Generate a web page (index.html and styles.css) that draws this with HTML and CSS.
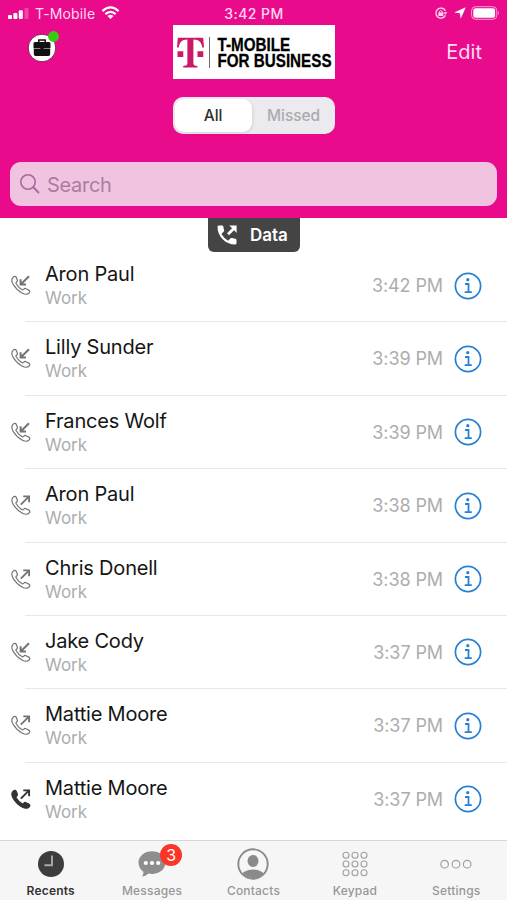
FILE: index.html
```html
<!DOCTYPE html>
<html lang="en">
<head>
    <meta charset="UTF-8">
    <meta name="viewport" content="width=device-width, initial-scale=1.0">
    <title>Recents</title>
    <link rel="stylesheet" href="styles.css">
</head>
<body>
    <!-- Shared icons -->
    <svg class="sprite">
        <symbol id="handset" viewBox="0 0 20 20">
            <path d="M2.2 2.1 C3.2 1.1 4.7 1.2 5.2 2.3 L6.3 5 C6.7 6.2 6.2 6.8 5.2 7.4 C4.8 7.7 4.9 8.2 5.2 8.7 C6.8 11.5 8.7 13.4 11.2 14.8 C11.8 15.1 12.2 15 12.6 14.5 C13.3 13.5 14 13.2 15 13.7 L17.8 15.1 C19 15.7 19.1 16.9 18.2 17.9 C16.6 19.7 13.7 19.4 11 17.9 C7.3 15.9 4.2 12.8 2.1 9.2 C.6 6.5 .3 3.9 2.2 2.1Z"/>
        </symbol>
        <symbol id="arrow-in" viewBox="0 0 20 20">
            <path d="M18 1.2 L10.2 9 M9.6 4.2 V9.6 H15" fill="none" stroke-width="2"/>
        </symbol>
        <symbol id="arrow-out" viewBox="0 0 20 20">
            <path d="M9.8 9.6 L17.6 1.8 M12.3 1.4 H18.1 V7.2" fill="none" stroke-width="1.9"/>
        </symbol>
        <symbol id="info" viewBox="0 0 28 28">
            <circle cx="14" cy="14" r="12.6" fill="none" stroke="#2680d4" stroke-width="1.7"/>
            <circle cx="13.8" cy="7.7" r="1.6" fill="#2680d4"/>
            <path d="M11 12 H14.5 V20 M10.7 20.2 H17.8" fill="none" stroke="#2680d4" stroke-width="1.8"/>
        </symbol>
    </svg>

    <header class="header">
        <div class="status-bar">
            <div class="carrier">
                <svg class="signal" viewBox="0 0 22 13">
                    <rect x="0" y="8" width="4" height="4" rx="1"/>
                    <rect x="5.4" y="6" width="4" height="6" rx="1"/>
                    <rect x="10.8" y="3.3" width="4" height="8.7" rx="1"/>
                    <rect x="16.5" y="1" width="4" height="11" rx="1" opacity=".25"/>
                </svg>
                <span class="carrier-name">T-Mobile</span>
                <svg class="wifi" viewBox="0 0 20 14">
                    <path d="M1.5 5 Q10 -2.8 18.5 5 M4.6 8.2 Q10 3.4 15.4 8.2" fill="none" stroke="#fff" stroke-width="2.3"/>
                    <path d="M6.8 10.2 Q10 7.6 13.2 10.2 L10 13.4Z" fill="#fff"/>
                </svg>
            </div>
            <span class="clock">3:42 PM</span>
            <div class="indicators">
                <svg class="lock" viewBox="0 0 14 12">
                    <path d="M11.4 8.4 A5 5 0 1 1 11.5 4" fill="none" stroke="#ffd3ee" stroke-width="1.3"/>
                    <path d="M9.2 5.2 H13.4 L11.3 7.8Z" fill="#ffd3ee"/>
                    <rect x="4.3" y="5.4" width="5" height="3.6" rx=".5" fill="#ffd3ee"/>
                    <path d="M5.4 5.8 V4.5 Q6.8 2.6 8.2 4.5 V5.8" fill="none" stroke="#ffd3ee"/>
                </svg>
                <svg class="location" viewBox="0 0 12 12">
                    <path d="M11.8 .2 L6.7 11.8 L5.8 6.2 L.2 5.5Z" fill="#fff"/>
                </svg>
                <svg class="battery" viewBox="0 0 29 14">
                    <rect x=".6" y=".7" width="25.2" height="12.6" rx="4" fill="none" stroke="#f7a4d7" stroke-width="1"/>
                    <rect x="2.3" y="2.3" width="21.8" height="9.4" rx="2.2" fill="#fff"/>
                    <path d="M27 4.6 Q28.8 7 27 9.4Z" fill="#f7a4d7"/>
                </svg>
            </div>
        </div>

        <div class="nav-bar">
            <svg class="work-profile" viewBox="0 0 34 34">
                <circle cx="15" cy="18" r="13.8" fill="#fff" stroke="#80205f" stroke-width="1"/>
                <path d="M11.8 12.3 V10 H18.2 V12.3" fill="none" stroke="#111" stroke-width="1.5"/>
                <path d="M8 12 H22 Q23.5 12 23.5 13.5 V18.2 H6.5 V13.5 Q6.5 12 8 12Z M6.8 18.8 H23.2 V24 Q23.2 26 21.5 26 H8.5 Q6.8 26 6.8 24Z" fill="#111"/>
                <rect x="13.4" y="17" width="3.2" height="3" fill="#111"/>
                <circle cx="26.5" cy="6.5" r="5.4" fill="#39cb12"/>
            </svg>
            <div class="brand">
                <svg class="brand-mark" viewBox="0 0 28 31">
                    <path d="M.8 .7 H26.2 L27 10.4 L25.3 10.6 C24.5 5.6 22.5 2.6 16.4 2.5 V25.5 C16.4 28.2 17.4 28.8 20.4 28.9 V30.5 H6.2 V28.9 C9.4 28.8 10.4 28.2 10.4 25.5 V2.5 C4.5 2.6 2.5 5.6 1.7 10.6 L0 10.4Z M.5 14.2 H6.3 V20 H.5Z M20.5 14.2 H26.3 V20 H20.5Z" fill="#cb1967"/>
                </svg>
                <div class="brand-name">T-MOBILE<br>FOR BUSINESS</div>
            </div>
            <span class="edit">Edit</span>
        </div>

        <div class="segmented">
            <span class="segment active">All</span>
            <span class="segment">Missed</span>
        </div>

        <div class="search">
            <svg class="search-icon" viewBox="0 0 20 20">
                <circle cx="8" cy="8" r="7.2" fill="none" stroke="#a66b98" stroke-width="1.6"/>
                <path d="M13.3 13.3 L19 19" stroke="#a66b98" stroke-width="2"/>
            </svg>
            <span class="search-text">Search</span>
        </div>
    </header>

    <div class="data-tab">
        <svg class="data-icon" viewBox="0 0 20 20">
            <path d="M.5 2 Q.5 .6 2 .6 H5 Q6.2 .6 6.4 1.8 Q6.5 3.6 7.1 5.2 Q7.3 6 6.8 6.6 L4.4 9 Q6.9 13.3 11.1 15.7 L13.5 13.3 Q14.1 12.8 14.9 13 L18.3 13.7 Q19.5 13.9 19.5 15.1 V18 Q19.5 19.5 18 19.5 C8.5 19.5 .5 11.5 .5 2Z" fill="#fff"/>
            <path d="M11 9.2 L17.8 2.4" stroke="#fff" stroke-width="2.8"/>
            <path d="M12.3 .4 H19.6 V7.7Z" fill="#fff"/>
        </svg>
        <span>Data</span>
    </div>

    <main class="calls">
        <div class="call">
            <svg class="call-icon"><use href="#handset"/><use href="#arrow-in"/></svg>
            <div class="call-body">
                <div class="who"><div class="name">Aron Paul</div><div class="label">Work</div></div>
                <span class="time">3:42 PM</span>
                <svg class="info"><use href="#info"/></svg>
            </div>
        </div>
        <div class="call">
            <svg class="call-icon"><use href="#handset"/><use href="#arrow-in"/></svg>
            <div class="call-body">
                <div class="who"><div class="name">Lilly Sunder</div><div class="label">Work</div></div>
                <span class="time">3:39 PM</span>
                <svg class="info"><use href="#info"/></svg>
            </div>
        </div>
        <div class="call">
            <svg class="call-icon"><use href="#handset"/><use href="#arrow-in"/></svg>
            <div class="call-body">
                <div class="who"><div class="name">Frances Wolf</div><div class="label">Work</div></div>
                <span class="time">3:39 PM</span>
                <svg class="info"><use href="#info"/></svg>
            </div>
        </div>
        <div class="call">
            <svg class="call-icon"><use href="#handset"/><use href="#arrow-out"/></svg>
            <div class="call-body">
                <div class="who"><div class="name">Aron Paul</div><div class="label">Work</div></div>
                <span class="time">3:38 PM</span>
                <svg class="info"><use href="#info"/></svg>
            </div>
        </div>
        <div class="call">
            <svg class="call-icon"><use href="#handset"/><use href="#arrow-out"/></svg>
            <div class="call-body">
                <div class="who"><div class="name">Chris Donell</div><div class="label">Work</div></div>
                <span class="time">3:38 PM</span>
                <svg class="info"><use href="#info"/></svg>
            </div>
        </div>
        <div class="call">
            <svg class="call-icon"><use href="#handset"/><use href="#arrow-in"/></svg>
            <div class="call-body">
                <div class="who"><div class="name">Jake Cody</div><div class="label">Work</div></div>
                <span class="time">3:37 PM</span>
                <svg class="info"><use href="#info"/></svg>
            </div>
        </div>
        <div class="call">
            <svg class="call-icon"><use href="#handset"/><use href="#arrow-out"/></svg>
            <div class="call-body">
                <div class="who"><div class="name">Mattie Moore</div><div class="label">Work</div></div>
                <span class="time">3:37 PM</span>
                <svg class="info"><use href="#info"/></svg>
            </div>
        </div>
        <div class="call">
            <svg class="call-icon solid"><use href="#handset"/><use href="#arrow-out"/></svg>
            <div class="call-body">
                <div class="who"><div class="name">Mattie Moore</div><div class="label">Work</div></div>
                <span class="time">3:37 PM</span>
                <svg class="info"><use href="#info"/></svg>
            </div>
        </div>
    </main>

    <nav class="tabs">
        <div class="tab current">
            <svg class="tab-icon" viewBox="0 0 32 32">
                <circle cx="16" cy="16" r="13" fill="#3d3d3d"/>
                <path d="M17 7.5 V17.3 H9.5" fill="none" stroke="#aaa" stroke-width="1.9"/>
            </svg>
            <span>Recents</span>
        </div>
        <div class="tab">
            <div class="tab-badge-wrap">
                <svg class="tab-icon" viewBox="0 0 32 32">
                    <path d="M16 3.2 C23.5 3.2 29.5 8 29.5 14.6 C29.5 21.2 23.5 26 16 26 C14.8 26 13.5 25.9 12.4 25.6 C10.4 27.5 8.3 28.6 6 28.6 C7.1 27.3 7.6 25.6 7.4 23.8 C4.3 21.8 2.5 18.5 2.5 14.6 C2.5 8 8.5 3.2 16 3.2Z" fill="#8e8e8e"/>
                    <circle cx="9.8" cy="15" r="2.1" fill="#fff"/>
                    <circle cx="16" cy="15" r="2.1" fill="#fff"/>
                    <circle cx="22.2" cy="15" r="2.1" fill="#fff"/>
                </svg>
                <span class="badge">3</span>
            </div>
            <span>Messages</span>
        </div>
        <div class="tab">
            <svg class="tab-icon" viewBox="0 0 32 32">
                <clipPath id="face"><circle cx="16" cy="16" r="14"/></clipPath>
                <g clip-path="url(#face)" fill="#8a8a8a">
                    <ellipse cx="16" cy="13" rx="5.5" ry="6"/>
                    <ellipse cx="16" cy="28" rx="11.5" ry="6.5"/>
                </g>
                <circle cx="16" cy="16" r="14.7" fill="none" stroke="#8a8a8a" stroke-width="1.9"/>
            </svg>
            <span>Contacts</span>
        </div>
        <div class="tab">
            <svg class="tab-icon" viewBox="0 0 32 32" fill="none" stroke="#a0a0a0" stroke-width="1.1">
                <circle cx="7" cy="7.2" r="3"/><circle cx="16" cy="7.2" r="3"/><circle cx="25" cy="7.2" r="3"/>
                <circle cx="7" cy="16" r="3"/><circle cx="16" cy="16" r="3"/><circle cx="25" cy="16" r="3"/>
                <circle cx="7" cy="24.8" r="3"/><circle cx="16" cy="24.8" r="3"/><circle cx="25" cy="24.8" r="3"/>
            </svg>
            <span>Keypad</span>
        </div>
        <div class="tab">
            <svg class="tab-icon" viewBox="0 0 32 32" fill="none" stroke="#a0a0a0" stroke-width="1.2">
                <circle cx="4.6" cy="16.2" r="3.8"/><circle cx="16" cy="16.2" r="3.8"/><circle cx="27.2" cy="16.2" r="3.8"/>
            </svg>
            <span>Settings</span>
        </div>
    </nav>
</body>
</html>
```
FILE: styles.css
```css
* {
    box-sizing: border-box;
}

body {
    font-family: Inter, "Liberation Sans", sans-serif;
    background-color: #fff;
    margin: 0;
    height: 900px;
    display: flex;
    flex-direction: column;
    overflow: hidden;
}

svg {
    display: block;
    flex-shrink: 0;
}

.sprite {
    display: none;
}

.header {
    background-color: #ea0b8c;
    height: 218px;
    color: #ffdaf1;
}

.status-bar {
    display: grid;
    grid-template-columns: 1fr auto 1fr;
    align-items: center;
    height: 25px;
    padding: 1px 7px 0 8px;
    font-size: 14px;
}

.carrier {
    display: flex;
    align-items: center;
}

.signal {
    width: 22px;
    height: 13px;
    fill: #fff;
}

.carrier-name {
    margin-left: 5px;
    letter-spacing: 0.15px;
}

.wifi {
    width: 19px;
    height: 14px;
    margin-left: 6px;
}

.clock {
    font-weight: 500;
    letter-spacing: 0.45px;
}

.indicators {
    display: flex;
    align-items: center;
    justify-content: flex-end;
}

.lock {
    width: 14px;
    height: 12px;
}

.location {
    width: 12px;
    height: 12px;
    margin: 0 5px 0 6px;
}

.battery {
    width: 29px;
    height: 14px;
}

.nav-bar {
    display: grid;
    grid-template-columns: 1fr 162px 1fr;
    height: 54px;
}

.work-profile {
    width: 34px;
    height: 34px;
    margin: 5px 0 0 27px;
}

.brand {
    display: flex;
    align-items: center;
    background-color: #fff;
    padding-left: 4px;
}

.brand-mark {
    width: 28px;
    height: 31px;
}

.brand-name {
    height: 31px;
    margin-left: 4px;
    padding-left: 9px;
    border-left: 1px solid #555;
    color: #000;
    font-family: "Liberation Sans", Arial, sans-serif;
    font-weight: bold;
    font-size: 18px;
    line-height: 16.5px;
    white-space: nowrap;
    transform: scaleX(0.845);
    transform-origin: left;
    -webkit-text-stroke: 0.3px #000;
}

.edit {
    justify-self: end;
    margin: 15px 25px 0 0;
    font-size: 20px;
    line-height: 24px;
}

.segmented {
    display: flex;
    width: 162px;
    height: 37px;
    margin: 18px auto 0;
    padding: 2px;
    border-radius: 10px;
    background-color: #ebeaee;
}

.segment {
    flex: 1;
    padding-left: 3px;
    font-size: 15.5px;
    font-weight: 500;
    line-height: 33px;
    letter-spacing: -0.1px;
    text-align: center;
    color: #aaaab0;
}

.segment.active {
    flex: none;
    width: 77px;
    padding-left: 0;
    border-radius: 9px;
    background-color: #fff;
    color: #303030;
    box-shadow: 1px 1px 3px rgba(0, 0, 0, 0.1);
}

.search {
    display: flex;
    align-items: center;
    height: 44px;
    margin: 28px 10px 0;
    padding-left: 10px;
    border-radius: 11px;
    background-color: #f0c4e1;
}

.search-icon {
    width: 20px;
    height: 20px;
}

.search-text {
    margin-left: 7px;
    padding-top: 1px;
    font-size: 20px;
    letter-spacing: -0.3px;
    color: #ab7c9f;
}

.data-tab {
    display: flex;
    align-items: center;
    width: 92px;
    height: 34px;
    margin-left: 208px;
    padding-left: 9px;
    border-radius: 0 0 6px 6px;
    background-color: #444;
    color: #fff;
    font-size: 17px;
    font-weight: 600;
}

.data-icon {
    width: 20px;
    height: 20px;
    margin-right: 13px;
}

.calls {
    height: 588px;
    margin-top: -3px;
}

.call {
    display: flex;
    height: 73.4px;
}

.call-icon {
    width: 20px;
    height: 20px;
    margin: 26px -6px 0 11px;
    fill: #fff;
    stroke: #747474;
    stroke-width: 1.2px;
}

.call-icon.solid {
    fill: #333;
    stroke: #333;
}

.call-body {
    display: flex;
    flex: 1;
    border-bottom: 1px solid #e7e7e7;
    padding: 0 25px 0 20px;
}

.call:last-child .call-body {
    border-bottom: none;
}

.who {
    flex: 1;
    padding-top: 13px;
}

.name {
    font-size: 20px;
    line-height: 24px;
    letter-spacing: -0.2px;
    color: #151515;
}

.label {
    font-size: 17px;
    line-height: 24px;
    color: #adadad;
}

.time {
    margin-top: 25px;
    font-size: 18px;
    line-height: 24px;
    letter-spacing: -0.1px;
    color: #adadad;
}

.info {
    width: 28px;
    height: 28px;
    margin: 22.5px 0 0 11px;
}

.tabs {
    display: grid;
    grid-template-columns: repeat(5, 1fr);
    height: 60px;
    margin-top: auto;
    border-top: 1px solid #d6d6d6;
    background-color: #f6f6f6;
}

.tab {
    display: flex;
    flex-direction: column;
    align-items: center;
    padding-top: 6.5px;
    font-size: 12px;
    font-weight: 500;
    line-height: 16px;
    letter-spacing: 0.2px;
    color: #969696;
}

.tab.current {
    color: #333;
    font-weight: 600;
}

.tab-icon {
    width: 32px;
    height: 32px;
    margin-bottom: 3.5px;
}

.tab-badge-wrap {
    position: relative;
}

.badge {
    position: absolute;
    top: -4px;
    right: -14px;
    width: 22px;
    height: 22px;
    border-radius: 50%;
    background-color: #fa3628;
    color: #fff;
    font-size: 16px;
    font-weight: 400;
    line-height: 22px;
    letter-spacing: 0;
    text-align: center;
}
```
